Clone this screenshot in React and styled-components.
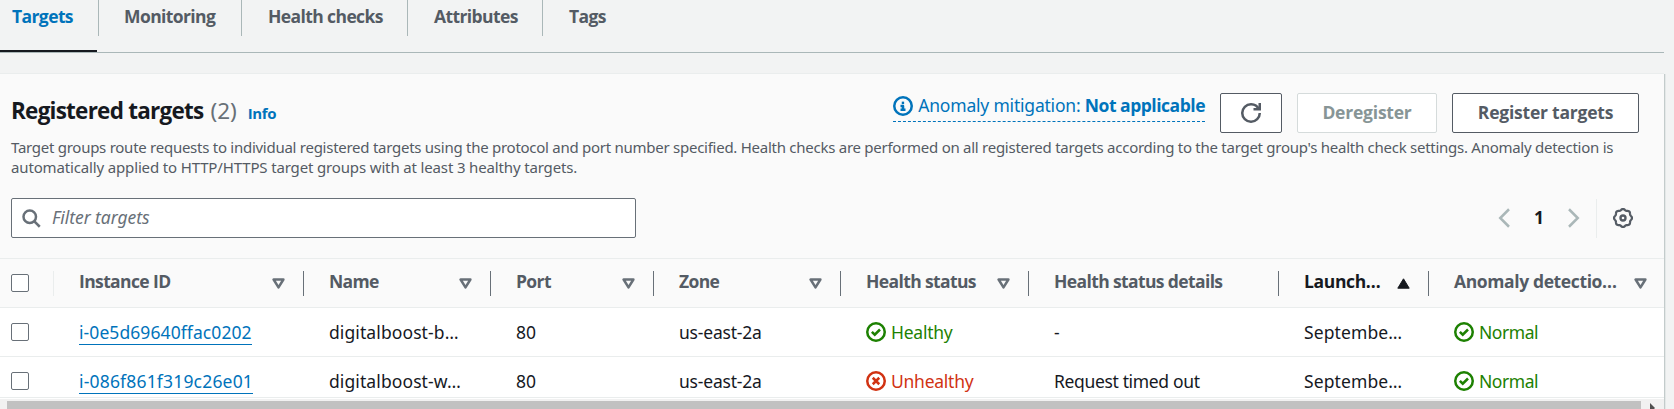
import React from 'react';
import styled, { createGlobalStyle, css } from 'styled-components';

const Global = createGlobalStyle`
  *, *::before, *::after { box-sizing: border-box; }
  body {
    margin: 0;
    background: #f2f3f3;
    color: #16191f;
    font: 400 17.5px/27.5px "Noto Sans", "Open Sans", sans-serif;
    overflow: hidden;
  }
`;

const semibold = css`
  font-family: "Open Sans", "Noto Sans", sans-serif;
  font-weight: 670;
`;

const Page = styled.main`
  width: 1674px;
  height: 409px;
  overflow: hidden;
`;

const Tabs = styled.nav`
  display: flex;
  width: 1664px;
  height: 53px;
  border-bottom: 1px solid #aab7b8;
`;

const Tab = styled.a`
  ${semibold}
  width: ${(p) => p.$width}px;
  height: 36px;
  padding: 3px 0 0 ${(p) => p.$indent ?? 25}px;
  border-right: ${(p) => (p.$last ? 'none' : '1px solid #aab7b8')};
  color: ${(p) => (p.$active ? '#0073bb' : '#545b64')};
  letter-spacing: -0.6px;
  white-space: nowrap;
  position: relative;

  &::after {
    content: "";
    display: ${(p) => (p.$active ? 'block' : 'none')};
    position: absolute;
    left: 0;
    right: 1px;
    top: 50px;
    height: 2px;
    background: #16191f;
  }
`;

const Panel = styled.section`
  width: 1664px;
  height: 336px;
  margin-top: 20px;
  border-top: 1px solid #eaeded;
  background: #fff;
  box-shadow: 1px 1px 0 #c3cbcb, 2px 1px 0 #e4e8e8;
`;

const PanelHeader = styled.header`
  height: 184px;
  padding: 19px 25px 0 11px;
  background: #fafafa;
`;

const TitleRow = styled.div`
  display: flex;
  justify-content: space-between;
  height: 40px;
`;

const Heading = styled.div`
  display: flex;
  align-items: baseline;
  padding-top: 4px;
`;

const Title = styled.h2`
  ${semibold}
  margin: 0;
  font-size: 22.5px;
  line-height: 28px;
  letter-spacing: -0.76px;
`;

const Counter = styled.span`
  margin-left: 7px;
  color: #687078;
  font-size: 22.5px;
  line-height: 28px;
`;

const InfoLink = styled.a`
  ${semibold}
  margin-left: 11px;
  color: #0073bb;
  font-size: 15px;
  letter-spacing: -0.4px;
`;

const Actions = styled.div`
  display: flex;
  gap: 15px;
`;

const Mitigation = styled.div`
  display: flex;
  align-items: center;
  gap: 5px;
  height: 27px;
  margin-top: 2px;
  padding-bottom: 4px;
  border-bottom: 1px dashed #0073bb;
  color: #0073bb;
  letter-spacing: -0.2px;
  white-space: nowrap;

  strong {
    ${semibold}
    letter-spacing: -0.48px;
  }
`;

const Button = styled.button`
  ${semibold}
  display: flex;
  align-items: center;
  justify-content: center;
  width: ${(p) => p.$width}px;
  height: 40px;
  padding: 0 0 3px;
  border: 1px solid ${(p) => (p.disabled ? '#d5dbdb' : '#545b64')};
  border-radius: 2px;
  background: #fff;
  color: ${(p) => (p.disabled ? '#879596' : '#545b64')};
  font-size: 17.5px;
  letter-spacing: -0.22px;
  white-space: nowrap;

  svg { margin-top: 3px; }
`;

const Description = styled.p`
  margin: 4px 0 0;
  color: #545b64;
  font-size: 15px;
  line-height: 20px;
  white-space: nowrap;
`;

const DescriptionLine = styled.span`
  display: block;
  letter-spacing: ${(p) => p.$tracking}px;
`;

const Tools = styled.div`
  display: flex;
  justify-content: space-between;
  margin-top: 21px;
`;

const Search = styled.label`
  display: flex;
  align-items: center;
  gap: 11px;
  width: 625px;
  height: 40px;
  padding-left: 9px;
  border: 1px solid #687078;
  border-radius: 2px;
  background: #fff;
`;

const Placeholder = styled.span`
  color: #687078;
  font-style: italic;
  letter-spacing: -0.05px;
`;

const Pagination = styled.div`
  display: flex;
  align-items: center;
  padding-right: 6px;
`;

const PageNumber = styled.span`
  ${semibold}
  width: 50px;
  text-align: center;
`;

const Preferences = styled.span`
  display: flex;
  align-items: center;
  height: 39px;
  margin-left: 12px;
  padding-left: 16px;
  border-left: 1px solid #eaeded;
`;

const columns = '54px 250px 187px 163px 187px 188px 250px 150px 235px';

const Row = styled.div`
  display: grid;
  grid-template-columns: ${columns};
  align-items: center;
  width: 1664px;
  height: ${(p) => p.$height ?? 49}px;
  border-bottom: 1px solid #eaeded;
`;

const HeadRow = styled(Row)`
  border-top: 1px solid #eaeded;
  background: #fafafa;
`;

const HeadCell = styled.div`
  ${semibold}
  display: flex;
  align-items: center;
  justify-content: space-between;
  height: 25px;
  padding: 0 ${(p) => (p.$last ? 17 : 18)}px 2px 25px;
  border-right: ${(p) => (p.$last ? 'none' : '1px solid #687078')};
  color: ${(p) => (p.$sorted ? '#16191f' : '#545b64')};
  letter-spacing: ${(p) => p.$tracking ?? -0.62}px;
  white-space: nowrap;

  svg { margin-top: 3px; }
`;

const CheckCell = styled.div`
  display: flex;
  align-items: center;
  height: 25px;
  padding-left: 11px;
  border-right: ${(p) => (p.$divided ? '1px solid #eaeded' : 'none')};
`;

const Checkbox = styled.span`
  width: 18px;
  height: 18px;
  border: 1px solid #687078;
  border-radius: 2px;
  background: #fff;
`;

const Cell = styled.div`
  display: flex;
  align-items: center;
  gap: 5px;
  height: 29px;
  padding: 1px 0 0 25px;
  color: ${(p) => p.$color ?? 'inherit'};
  letter-spacing: ${(p) => p.$tracking ?? 0}px;
  white-space: nowrap;

  svg { margin-top: -1px; }
`;

const InstanceLink = styled.a`
  height: 24px;
  margin-top: 1px;
  border-bottom: 1px solid #0073bb;
  color: #0073bb;
  line-height: 22.5px;
`;

const ClippedRows = styled.div`
  height: 90px;
  overflow: hidden;
  border-bottom: 1px solid #eaeded;
`;

const ScrollTrack = styled.div`
  display: flex;
  justify-content: space-between;
  width: 1664px;
  height: 11px;
  margin-top: 1px;
  padding: 2px 7px 0;
  background: #f1f1f1;
`;

const ScrollThumb = styled.div`
  width: 1634px;
  background: #c1c1c1;
`;

const Svg = ({ size = 20, children, ...rest }) => (
  <svg width={size} height={size} viewBox="0 0 16 16" fill="none" stroke="currentColor" strokeWidth="2" {...rest}>
    {children}
  </svg>
);

const InfoIcon = () => (
  <Svg>
    <circle cx="8" cy="8" r="7" />
    <path d="M8 11V8H6M10 11H6" strokeLinejoin="round" />
    <path d="M7 5.5h1.9" />
  </Svg>
);

const CheckIcon = () => (
  <Svg>
    <circle cx="8" cy="8" r="7" />
    <path d="m4.7 7.9 2.3 2.3 4.2-4.2" />
  </Svg>
);

const ErrorIcon = () => (
  <Svg>
    <circle cx="8" cy="8" r="7" />
    <path d="m10.6 5.4-5.2 5.2M10.6 10.6 5.4 5.4" />
  </Svg>
);

const RefreshIcon = () => (
  <Svg>
    <path d="M10 5h5V0" />
    <path d="M15 8a6.957 6.957 0 0 1-7 7 6.957 6.957 0 0 1-7-7 6.957 6.957 0 0 1 7-7 6.87 6.87 0 0 1 6.3 4" />
  </Svg>
);

const SearchIcon = () => (
  <Svg color="#687078">
    <circle cx="7" cy="7" r="5" />
    <path d="m15 15-4.5-4.5" />
  </Svg>
);

// Cog outline: a circle whose radius swells into eight rounded teeth.
const cogOutline = `M${Array.from({ length: 96 }, (_, i) => {
  const angle = (i / 96) * Math.PI * 2;
  const radius = 6.75 + 0.45 * Math.cos(8 * angle);
  return `${(8 + radius * Math.cos(angle)).toFixed(2)} ${(8 + radius * Math.sin(angle)).toFixed(2)}`;
}).join('L')}Z`;

const GearIcon = () => (
  <Svg color="#545b64">
    <path d={cogOutline} strokeWidth="1.8" />
    <circle cx="8" cy="8" r="2" strokeWidth="1.9" />
  </Svg>
);

const Chevron = ({ right }) => (
  <Svg color="#aab7b8">
    <path d={right ? 'm4 1 7 7-7 7' : 'm12 1-7 7 7 7'} />
  </Svg>
);

const SortIcon = ({ ascending }) => (
  <svg width="13" height="11" viewBox="0 0 13 11">
    {ascending ? (
      <path d="M6.5 0.8 12.2 10.2H0.8Z" fill="#16191f" stroke="#16191f" strokeLinejoin="round" />
    ) : (
      <path d="M1.6 1.5h9.8L6.5 9.4Z" fill="none" stroke="#687078" strokeWidth="2.5" strokeLinejoin="round" />
    )}
  </svg>
);

const headings = [
  { label: 'Instance ID' },
  { label: 'Name' },
  { label: 'Port' },
  { label: 'Zone' },
  { label: 'Health status' },
  { label: 'Health status details', unsortable: true },
  { label: 'Launch…', sorted: true, tracking: -0.35 },
  { label: 'Anomaly detectio…', last: true, tracking: -0.38 },
];

const targets = [
  { id: 'i-0e5d69640ffac0202', tracking: 0.08, name: 'digitalboost-b…', healthy: true, details: '-' },
  { id: 'i-086f861f319c26e01', tracking: 0.18, name: 'digitalboost-w…', healthy: false, details: 'Request timed out' },
];

const TargetRow = ({ target }) => (
  <Row>
    <CheckCell><Checkbox /></CheckCell>
    <Cell $tracking={target.tracking}><InstanceLink>{target.id}</InstanceLink></Cell>
    <Cell $tracking={0.1}>{target.name}</Cell>
    <Cell>80</Cell>
    <Cell $tracking={-0.2}>us-east-2a</Cell>
    <Cell $color={target.healthy ? '#1d8102' : '#d13212'} $tracking={-0.25}>
      {target.healthy ? <CheckIcon /> : <ErrorIcon />}
      {target.healthy ? 'Healthy' : 'Unhealthy'}
    </Cell>
    <Cell $tracking={-0.35}>{target.details}</Cell>
    <Cell $tracking={0.1}>Septembe…</Cell>
    <Cell $color="#1d8102" $tracking={-0.45}><CheckIcon />Normal</Cell>
  </Row>
);

export default function App() {
  return (
    <Page>
      <Global />
      <Tabs>
        <Tab $active $width={99} $indent={12}>Targets</Tab>
        <Tab $width={143}>Monitoring</Tab>
        <Tab $width={166} $indent={26}>Health checks</Tab>
        <Tab $width={135} $indent={26}>Attributes</Tab>
        <Tab $last $width={90} $indent={26}>Tags</Tab>
      </Tabs>
      <Panel>
        <PanelHeader>
          <TitleRow>
            <Heading>
              <Title>Registered targets</Title>
              <Counter>(2)</Counter>
              <InfoLink>Info</InfoLink>
            </Heading>
            <Actions>
              <Mitigation>
                <InfoIcon />
                <span>Anomaly mitigation: <strong>Not applicable</strong></span>
              </Mitigation>
              <Button $width={62} aria-label="Refresh"><RefreshIcon /></Button>
              <Button $width={140} disabled>Deregister</Button>
              <Button $width={187}>Register targets</Button>
            </Actions>
          </TitleRow>
          <Description>
            <DescriptionLine $tracking={-0.264}>
              Target groups route requests to individual registered targets using the protocol and port number specified. Health checks are performed on all registered targets according to the target group's health check settings. Anomaly detection is{' '}
            </DescriptionLine>
            <DescriptionLine $tracking={-0.147}>
              automatically applied to HTTP/HTTPS target groups with at least 3 healthy targets.
            </DescriptionLine>
          </Description>
          <Tools>
            <Search>
              <SearchIcon />
              <Placeholder>Filter targets</Placeholder>
            </Search>
            <Pagination>
              <Chevron />
              <PageNumber>1</PageNumber>
              <Chevron right />
              <Preferences><GearIcon /></Preferences>
            </Pagination>
          </Tools>
        </PanelHeader>
        <HeadRow $height={50}>
          <CheckCell $divided><Checkbox /></CheckCell>
          {headings.map((h) => (
            <HeadCell key={h.label} $sorted={h.sorted} $last={h.last} $tracking={h.tracking}>
              {h.label}
              {!h.unsortable && <SortIcon ascending={h.sorted} />}
            </HeadCell>
          ))}
        </HeadRow>
        <ClippedRows>
          {targets.map((t) => <TargetRow key={t.id} target={t} />)}
        </ClippedRows>
        <ScrollTrack>
          <ScrollThumb />
          <svg width="7" height="9" viewBox="0 0 7 9"><path d="M0 2v10l5-5Z" fill="#505050" /></svg>
        </ScrollTrack>
      </Panel>
    </Page>
  );
}
